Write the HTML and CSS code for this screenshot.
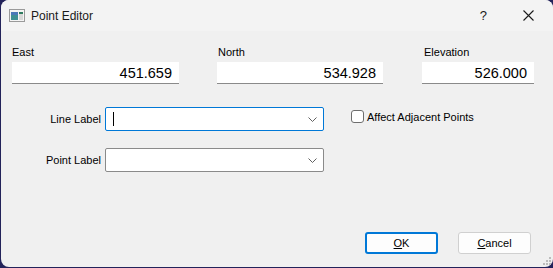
FILE: index.html
```html
<!DOCTYPE html>
<html lang="en">
  <head>
    <meta charset="UTF-8" />
    <title>Point Editor</title>
    <link rel="stylesheet" href="styles.css">
  </head>
  <body>
    <div class="window">
      <div class="titlebar">
        <svg class="app_icon" width="16" height="13" viewBox="0 0 16 13">
          <rect x="0.5" y="0.5" width="15" height="12" fill="#f4f4f4" stroke="#9a9a9a" />
          <rect x="2" y="3" width="7" height="8" fill="#3f8f93" />
          <rect x="2" y="3" width="7" height="3" fill="#4a78b8" />
          <rect x="10" y="3" width="4" height="8" fill="#d8d8d8" />
          <rect x="10" y="3" width="4" height="2" fill="#2e7a5e" />
        </svg>
        <span class="title">Point Editor</span>
        <span class="help">?</span>
        <svg class="close" width="11" height="11" viewBox="0 0 11 11">
          <path d="M0.5 0.5 L10.5 10.5 M10.5 0.5 L0.5 10.5" stroke="#1a1a1a" stroke-width="1.1" />
        </svg>
      </div>

      <div class="content">
        <div class="coords">
          <div class="field east">
            <label>East</label>
            <div class="num_box">451.659</div>
          </div>
          <div class="field north">
            <label>North</label>
            <div class="num_box">534.928</div>
          </div>
          <div class="field elev">
            <label>Elevation</label>
            <div class="num_box">526.000</div>
          </div>
        </div>

        <div class="label_row first">
          <span class="row_label">Line Label</span>
          <div class="combo focused">
            <span class="caret"></span>
            <svg class="chev" width="9" height="5" viewBox="0 0 9 5">
              <path d="M0.5 0.5 L4.5 4.5 L8.5 0.5" fill="none" stroke="#606060" />
            </svg>
          </div>
          <div class="check">
            <span class="box"></span>
            <span>Affect Adjacent Points</span>
          </div>
        </div>

        <div class="label_row">
          <span class="row_label">Point Label</span>
          <div class="combo">
            <svg class="chev" width="9" height="5" viewBox="0 0 9 5">
              <path d="M0.5 0.5 L4.5 4.5 L8.5 0.5" fill="none" stroke="#606060" />
            </svg>
          </div>
        </div>

        <div class="buttons">
          <button class="btn default"><u>O</u>K</button>
          <button class="btn"><u>C</u>ancel</button>
        </div>
      </div>

      <svg class="grip" width="8" height="8" viewBox="0 0 8 8">
        <rect x="6" y="0" width="2" height="2" fill="#bcbcbc" />
        <rect x="3" y="3" width="2" height="2" fill="#bcbcbc" />
        <rect x="6" y="3" width="2" height="2" fill="#bcbcbc" />
        <rect x="0" y="6" width="2" height="2" fill="#bcbcbc" />
        <rect x="3" y="6" width="2" height="2" fill="#bcbcbc" />
        <rect x="6" y="6" width="2" height="2" fill="#bcbcbc" />
      </svg>
    </div>
  </body>
</html>
```

FILE: styles.css
```css
* {
  margin: 0;
  padding: 0;
  box-sizing: border-box;
}
html,
body {
  width: 553px;
  height: 268px;
  overflow: hidden;
}
body {
  background: #23235a;
  font-family: "Liberation Sans", Arial, sans-serif;
  font-size: 11px;
  color: #000;
}
.window {
  position: relative;
  width: 552px;
  height: 267px;
  margin-left: 1px;
  background: #f0f0f0;
  border-radius: 8px;
  overflow: hidden;
}
.titlebar {
  height: 31px;
  background: #f3f3f3;
  display: flex;
  align-items: center;
  padding-left: 8px;
}
.app_icon {
  margin-top: -1px;
}
.title {
  font-size: 12px;
  margin-left: 6px;
  color: #1a1a1a;
  flex: 1;
}
.help {
  font-size: 13px;
  color: #1a1a1a;
  margin-right: 36px;
}
.close {
  margin-right: 19px;
}
.content {
  padding: 15px 0 0 11px;
}
.coords {
  display: flex;
}
.field label {
  display: block;
  line-height: 13px;
  height: 16px;
}
.num_box {
  height: 22px;
  background: #fff;
  border-bottom: 1px solid #8a8a8a;
  text-align: right;
  font-size: 14.5px;
  line-height: 22px;
  padding-right: 7px;
  color: #000;
}
.east {
  width: 167px;
}
.north {
  width: 166px;
  margin-left: 38px;
}
.north label {
  padding-left: 1px;
}
.elev {
  width: 112px;
  margin-left: 39px;
}
.elev label {
  padding-left: 2px;
}
.label_row {
  display: flex;
  align-items: flex-start;
  margin-top: 17px;
}
.label_row.first {
  margin-top: 23px;
}
.row_label {
  width: 89px;
  text-align: right;
  line-height: 24px;
}
.combo {
  position: relative;
  width: 219px;
  height: 24px;
  margin-left: 4px;
  background: #fff;
  border: 1px solid #8a8a8a;
  border-radius: 2px;
  display: flex;
  align-items: center;
  justify-content: flex-end;
  padding-right: 6px;
}
.combo.focused {
  border-color: #0078d7;
}
.caret {
  position: absolute;
  left: 7px;
  top: 4px;
  width: 1px;
  height: 14px;
  background: #000;
}
.check {
  display: flex;
  align-items: center;
  margin-left: 27px;
  margin-top: 3px;
}
.check .box {
  width: 13px;
  height: 13px;
  border: 1px solid #6e6e6e;
  border-radius: 3px;
  background: #fff;
  margin-right: 3px;
}
.buttons {
  display: flex;
  justify-content: flex-end;
  gap: 20px;
  margin-top: 60px;
  padding-right: 22px;
}
.btn {
  width: 73px;
  height: 22px;
  background: #fdfdfd;
  border: 1px solid #d0d0d0;
  border-radius: 3px;
  font-family: "Liberation Sans", Arial, sans-serif;
  font-size: 11px;
  color: #000;
}
.btn.default {
  border: 2px solid #0078d7;
}
.grip {
  position: absolute;
  right: 2px;
  bottom: 2px;
}
```
